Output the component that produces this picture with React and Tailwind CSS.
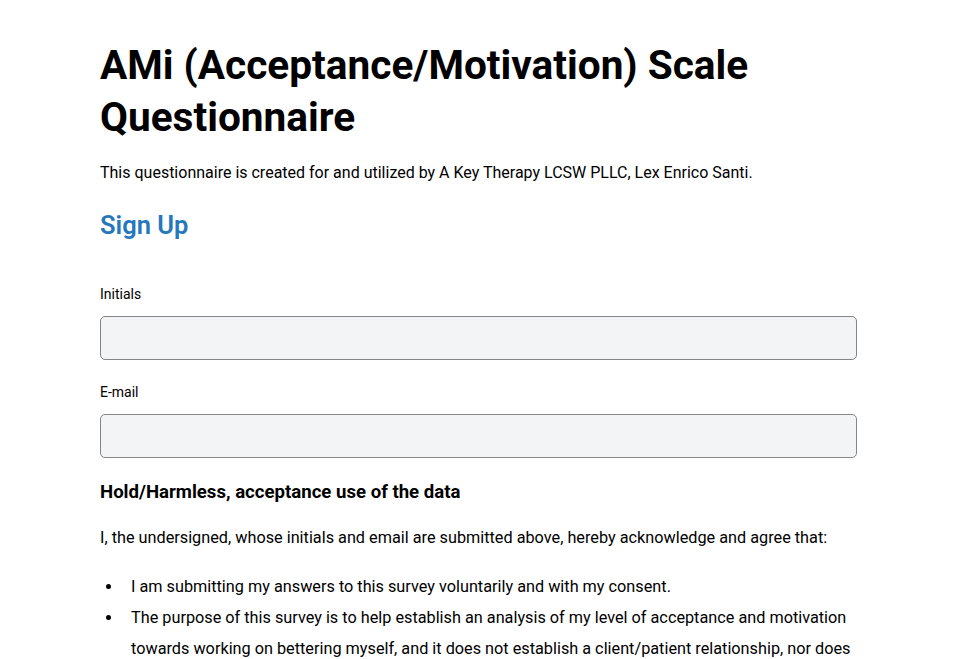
export default function App() {
  const font = { fontFamily: 'Roboto, "Liberation Sans", sans-serif' };
  return (
    <div className="min-h-screen bg-white text-black" style={font}>
      <div className="w-[857px] pl-[100px] pt-[39px]">
        <h1 className="text-[40.6px] leading-[52px] font-bold">
          <span className="block">AMi (Acceptance/Motivation) Scale</span>
          <span className="block">Questionnaire</span>
        </h1>
        <p className="mt-[18px] text-[16px] leading-[24px]">
          This questionnaire is created for and utilized by A Key Therapy LCSW PLLC, Lex Enrico Santi.
        </p>
        <h2 className="mt-[24px] text-[25.5px] leading-[32px] font-semibold text-[#2677bb]">Sign Up</h2>

        <label className="mt-[43px] block text-[14px] leading-[20px]">Initials</label>
        <div className="mt-[12px] h-[44px] rounded-[5px] border border-[#858585] bg-[#f3f4f6]" />

        <label className="mt-[22px] block text-[14px] leading-[20px]">E-mail</label>
        <div className="mt-[12px] h-[44px] rounded-[5px] border border-[#858585] bg-[#f3f4f6]" />

        <h3 className="mt-[22px] text-[18.6px] leading-[24px] font-bold">
          Hold/Harmless, acceptance use of the data
        </h3>
        <p className="mt-[20px] text-[16.25px] leading-[28px]">
          I, the undersigned, whose initials and email are submitted above, hereby acknowledge and agree that:
        </p>
        <ul className="mt-[19px] text-[16.25px] leading-[31px]">
          <li className="flex">
            <span className="flex h-[31px] w-[31px] shrink-0 items-center pl-[6px]">
              <span className="block h-[5px] w-[5px] rounded-full bg-black" />
            </span>
            <span>I am submitting my answers to this survey voluntarily and with my consent.</span>
          </li>
          <li className="flex">
            <span className="flex h-[31px] w-[31px] shrink-0 items-center pl-[6px]">
              <span className="block h-[5px] w-[5px] rounded-full bg-black" />
            </span>
            <span className="whitespace-nowrap">
              The purpose of this survey is to help establish an analysis of my level of acceptance and motivation
              <br />
              towards working on bettering myself, and it does not establish a client/patient relationship, nor does
            </span>
          </li>
        </ul>
      </div>
    </div>
  );
}
